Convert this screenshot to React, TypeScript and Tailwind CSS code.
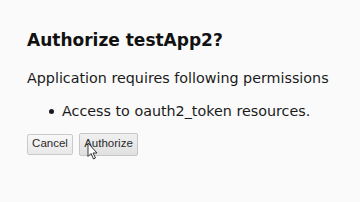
export default function App() {
  return (
    <div
      className="w-[360px] h-[202px] bg-[#fafafa] text-[#1a1a1a] relative overflow-hidden pl-[27px] pt-[30px]"
      style={{ fontFamily: '"DejaVu Sans", Verdana, sans-serif' }}
    >
      <h1 className="text-[17px] leading-[20px] font-bold text-[#111]">Authorize testApp2?</h1>
      <p className="mt-[19.5px] text-[14.3px] leading-[17px]">Application requires following permissions</p>
      <ul className="mt-[16px] ml-[22px] text-[14.3px] leading-[17px]">
        <li className="flex items-center gap-[8px]">
          <span className="w-[5px] h-[5px] rounded-full bg-[#1a1a1a]" />
          <span>Access to oauth2_token resources.</span>
        </li>
      </ul>
      <div
        className="mt-[13px] flex items-center gap-[6px] text-[11.5px] text-[#2a2a2a]"
        style={{ fontFamily: '"Liberation Sans", Arial, sans-serif' }}
      >
        <button className="h-[21px] w-[46px] rounded-[2px] border border-[#cacaca] bg-gradient-to-b from-[#f8f8f8] to-[#e8e8e8]">
          Cancel
        </button>
        <button className="h-[23px] w-[59px] rounded-[2px] border border-[#c6c6c6] bg-gradient-to-b from-[#f0f0f0] to-[#e0e0e0]">
          Authorize
        </button>
      </div>
      <svg
        className="absolute left-[87px] top-[142px]"
        width="12"
        height="19"
        viewBox="0 0 12 19"
      >
        <path d="M1 1 L1 14.5 L4 11.5 L6.5 17 L8.5 16 L6 11 L10 11 Z" fill="#fff" stroke="#333" strokeWidth="1" strokeLinejoin="round" />
      </svg>
    </div>
  );
}
